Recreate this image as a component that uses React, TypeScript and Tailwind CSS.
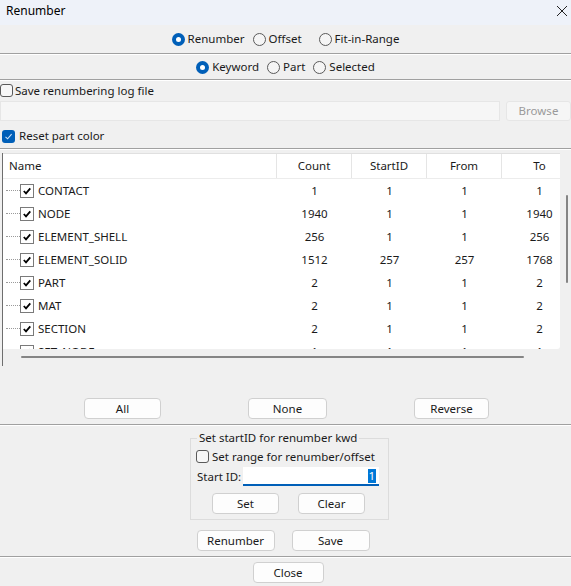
import React from "react";

const font = { fontFamily: '"Noto Sans", "Open Sans", Arial, sans-serif' };

function Radio({ checked, label }: { checked?: boolean; label: string }) {
  return (
    <div className="flex items-center gap-[3px]">
      {checked ? (
        <span className="w-[13px] h-[13px] rounded-full bg-[#005fb8] flex items-center justify-center">
          <span className="w-[5px] h-[5px] rounded-full bg-white" />
        </span>
      ) : (
        <span className="w-[13px] h-[13px] rounded-full border border-[#5a5a5a] bg-[#f5f5f5]" />
      )}
      <span>{label}</span>
    </div>
  );
}

function Check({ checked }: { checked?: boolean }) {
  return checked ? (
    <span className="w-[13px] h-[13px] rounded-[3px] bg-[#005fb8] flex items-center justify-center">
      <svg width="9" height="9" viewBox="0 0 9 9">
        <path d="M1.5 4.8 L3.6 6.8 L7.6 2.2" stroke="#cfe3f7" strokeWidth="1.1" fill="none" />
      </svg>
    </span>
  ) : (
    <span className="w-[13px] h-[13px] rounded-[3px] border border-[#5a5a5a] bg-[#f7f7f7]" />
  );
}

function Sep() {
  return (
    <div className="flex flex-col shrink-0">
      <div className="h-px bg-[#a0a0a0]" />
      <div className="h-px bg-white" />
    </div>
  );
}

function Btn({ label, w }: { label: string; w: string }) {
  return (
    <div
      className={`${w} h-[21px] flex items-center justify-center bg-[#fdfdfd] border border-[#d0d0d0] rounded-[4px] text-[#1a1a1a]`}
    >
      {label}
    </div>
  );
}

const rows = [
  ["CONTACT", "1", "1", "1", "1"],
  ["NODE", "1940", "1", "1", "1940"],
  ["ELEMENT_SHELL", "256", "1", "1", "256"],
  ["ELEMENT_SOLID", "1512", "257", "257", "1768"],
  ["PART", "2", "1", "1", "2"],
  ["MAT", "2", "1", "1", "2"],
  ["SECTION", "2", "1", "1", "2"],
  ["SET_NODE", "1", "1", "1", "1"],
];

function TreeCheck() {
  return (
    <span className="w-[14px] h-[14px] border border-[#7a7a7a] bg-white flex items-center justify-center">
      <svg width="10" height="10" viewBox="0 0 10 10">
        <path d="M1.8 5 L4 7.3 L8.3 2.4" stroke="#000" strokeWidth="1.8" fill="none" />
      </svg>
    </span>
  );
}

export default function App() {
  return (
    <div className="w-[571px] h-[586px] bg-[#f0f0f0] text-[11.5px] text-[#1a1a1a] overflow-hidden flex flex-col" style={font}>
      {/* title bar */}
      <div className="h-[25px] bg-[#eef2f9] flex items-start justify-between pl-[6px] pr-[2px] pt-[2px] shrink-0">
        <span className="text-[12px] text-black">Renumber</span>
        <svg width="14" height="14" viewBox="0 0 14 14" className="mt-[2px]">
          <path d="M2 2 L12 12 M12 2 L2 12" stroke="#222" strokeWidth="1" />
        </svg>
      </div>
      {/* radios 1 */}
      <div className="h-[28px] flex items-center justify-center gap-[8px] shrink-0">
        <Radio checked label="Renumber" />
        <Radio label="Offset" />
        <span className="w-[1px]" />
        <Radio label="Fit-in-Range" />
      </div>
      <Sep />
      {/* radios 2 */}
      <div className="h-[24px] flex items-center justify-center gap-[8px] shrink-0">
        <Radio checked label="Keyword" />
        <Radio label="Part" />
        <Radio label="Selected" />
      </div>
      <Sep />
      <div className="h-[19px] flex items-center gap-[2px] shrink-0">
        <Check />
        <span>Save renumbering log file</span>
      </div>
      <div className="h-[20px] mt-[1px] flex gap-[6px] shrink-0">
        <div className="w-[500px] h-[20px] bg-[#f6f6f6] border border-[#e6e6e6]" />
        <div className="flex-1 h-[20px] bg-[#f6f6f6] border border-[#e6e6e6] rounded-[3px] flex items-center justify-center text-[#9a9a9a]">
          Browse
        </div>
      </div>
      <div className="h-[20px] mt-[5px] flex items-center gap-[4px] pl-[2px] shrink-0">
        <Check checked />
        <span>Reset part color</span>
      </div>
      <div className="h-[2px] shrink-0" />
      <Sep />
      {/* table */}
      <div className="h-[213px] mt-[3px] ml-[2px] border-l border-[#6e6e6e] relative overflow-hidden shrink-0 bg-[#f0f0f0]">
        <div className="absolute left-0 top-0 w-[557px] h-[196px] bg-white rounded-br-[3px] overflow-hidden">
          <div className="w-[600px] h-[26px] flex border-t border-[#e0e0e0] border-b border-b-[#ececec] bg-white">
            <div className="w-[274px] pl-[6px] flex items-center border-r border-[#e5e5e5]">Name</div>
            <div className="w-[75px] flex items-center justify-center border-r border-[#e5e5e5]">Count</div>
            <div className="w-[75px] flex items-center justify-center border-r border-[#e5e5e5]">StartID</div>
            <div className="w-[75px] flex items-center justify-center border-r border-[#e5e5e5]">From</div>
            <div className="w-[75px] flex items-center justify-center">To</div>
          </div>
          <div className="flex flex-col">
            {rows.map((r) => (
              <div key={r[0]} className="h-[23px] flex items-center w-[600px]">
                <div className="w-[274px] flex items-center pl-[3px]">
                  <span className="w-[14px] border-t border-dotted border-[#9a9a9a]" />
                  <TreeCheck />
                  <span className="ml-[4px]">{r[0]}</span>
                </div>
                <div className="w-[75px] text-center">{r[1]}</div>
                <div className="w-[75px] text-center">{r[2]}</div>
                <div className="w-[75px] text-center">{r[3]}</div>
                <div className="w-[75px] text-center">{r[4]}</div>
              </div>
            ))}
          </div>
        </div>
        {/* vertical scrollbar thumb */}
        <div className="absolute left-[563px] top-[42px] w-[2px] h-[88px] bg-[#858585] rounded-full" />
        {/* horizontal scrollbar thumb */}
        <div className="absolute left-[18px] top-[203px] w-[503px] h-[2px] bg-[#858585] rounded-full" />
      </div>
      {/* buttons */}
      <div className="mt-[32px] flex justify-center gap-[87px] pl-[2px] shrink-0">
        <Btn label="All" w="w-[77px]" />
        <Btn label="None" w="w-[79px]" />
        <Btn label="Reverse" w="w-[75px]" />
      </div>
      <div className="h-[5px] shrink-0" />
      <Sep />
      {/* group box */}
      <div className="mt-[12px] ml-[190px] w-[199px] h-[82px] border border-[#dcdcdc] relative shrink-0">
        <span className="absolute -top-[10px] left-[6px] px-[2px] bg-[#f0f0f0] leading-[18px]">Set startID for renumber kwd</span>
        <div className="mt-[9px] pl-[5px] flex items-center gap-[3px]">
          <Check />
          <span>Set range for renumber/offset</span>
        </div>
        <div className="mt-[2px] pl-[6px] flex items-center gap-[2px]">
          <span>Start ID:</span>
          <div className="w-[136px] h-[19px] bg-white border-b-2 border-[#005fb8] flex items-center justify-end pr-[3px]">
            <span className="bg-[#0078d7] text-white leading-[14px] px-[1px]">1</span>
          </div>
        </div>
        <div className="mt-[7px] flex gap-[19px] pl-[21px]">
          <Btn label="Set" w="w-[67px]" />
          <Btn label="Clear" w="w-[67px]" />
        </div>
      </div>
      <div className="mt-[10px] flex justify-center gap-[17px] pr-[5px] shrink-0">
        <Btn label="Renumber" w="w-[78px]" />
        <Btn label="Save" w="w-[78px]" />
      </div>
      <div className="h-[5px] shrink-0" />
      <Sep />
      <div className="mt-[4px] flex justify-center pl-[5px] shrink-0">
        <Btn label="Close" w="w-[71px]" />
      </div>
    </div>
  );
}
